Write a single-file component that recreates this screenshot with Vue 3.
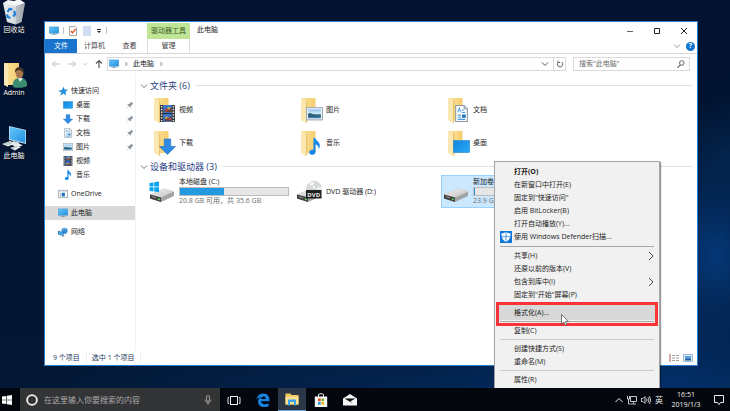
<script setup>
import { ref } from 'vue'

const shortcuts = [
  { icon: 'bin', label: '回收站' },
  { icon: 'user', label: 'Admin' },
  { icon: 'desk-pc', label: '此电脑' },
]

const sidebar = [
  [
    { icon: 'star', label: '快速访问' },
    { icon: 'desktop', label: '桌面', child: true, pinned: true },
    { icon: 'down', label: '下载', child: true, pinned: true },
    { icon: 'doc', label: '文档', child: true, pinned: true },
    { icon: 'picture', label: '图片', child: true, pinned: true },
    { icon: 'film', label: '视频', child: true },
    { icon: 'note', label: '音乐', child: true },
  ],
  [{ icon: 'onedrive', label: 'OneDrive' }],
  [{ icon: 'pc', label: '此电脑', current: true }],
  [{ icon: 'network', label: '网络' }],
]

const folders = [
  { badge: 'film', label: '视频' },
  { badge: 'picture', label: '图片' },
  { badge: 'doc', label: '文档' },
  { badge: 'down', label: '下载' },
  { badge: 'note', label: '音乐' },
  { badge: 'desktop', label: '桌面' },
]

const drives = [
  { icon: 'drive-win', label: '本地磁盘 (C:)', used: 41, info: '20.8 GB 可用，共 35.6 GB' },
  { icon: 'dvd', label: 'DVD 驱动器 (D:)' },
  { icon: 'drive', label: '新加卷', used: 1, info: '23.9 GB', selected: true },
]

const menu = [
  [
    { label: '打开(O)', bold: true },
    { label: '在新窗口中打开(E)' },
    { label: '固定到"快速访问"' },
    { label: '启用 BitLocker(B)' },
    { label: '打开自动播放(Y)...' },
    { label: '使用 Windows Defender扫描...', icon: 'shield' },
  ],
  [
    { label: '共享(H)', more: true },
    { label: '还原以前的版本(V)' },
    { label: '包含到库中(I)', more: true },
    { label: '固定到"开始"屏幕(P)' },
  ],
  [{ label: '格式化(A)...', active: true }],
  [{ label: '复制(C)' }],
  [{ label: '创建快捷方式(S)' }, { label: '重命名(M)' }],
  [{ label: '属性(R)' }],
]

const apps = [
  { icon: 'taskview', label: '任务视图' },
  { icon: 'edge', label: 'Edge' },
  { icon: 'explorer', label: '文件资源管理器', open: true },
  { icon: 'store', label: '应用商店' },
  { icon: 'mail', label: '邮件' },
]

const fileQuery = ref('')
const webQuery = ref('')
</script>

<template>
  <div class="screen">
    <svg class="sprites" aria-hidden="true">
      <defs>
        <linearGradient id="g-fold" x1="0" y1="0" x2="1" y2="0">
          <stop offset="0" stop-color="#fbe3a0" />
          <stop offset="1" stop-color="#f6cd6d" />
        </linearGradient>
        <linearGradient id="g-blue" x1="0" y1="0" x2="1" y2="1">
          <stop offset="0" stop-color="#1583dc" />
          <stop offset="1" stop-color="#27aaf8" />
        </linearGradient>
        <linearGradient id="g-screen" x1="0" y1="0" x2="1" y2="1">
          <stop offset="0" stop-color="#62c6fb" />
          <stop offset="1" stop-color="#2391e0" />
        </linearGradient>
        <linearGradient id="g-sky" x1="0" y1="0" x2="0" y2="1">
          <stop offset="0" stop-color="#8fc1ee" />
          <stop offset="0.5" stop-color="#d6ebf8" />
          <stop offset="0.6" stop-color="#34708a" />
          <stop offset="1" stop-color="#3f7fb8" />
        </linearGradient>
        <linearGradient id="g-bin" x1="0" y1="0" x2="1" y2="0">
          <stop offset="0" stop-color="#e9edf0" />
          <stop offset="0.6" stop-color="#d2d8dc" />
          <stop offset="1" stop-color="#8f979d" />
        </linearGradient>
        <linearGradient id="g-metal" x1="0" y1="0" x2="1" y2="1">
          <stop offset="0" stop-color="#f1f1f1" />
          <stop offset="1" stop-color="#c2c2c2" />
        </linearGradient>
      </defs>
      <symbol id="desktop" viewBox="0 0 16 16">
        <rect x="0.5" y="2.5" width="15" height="11" fill="url(#g-blue)" stroke="#1c86dc" stroke-width="0.600" />
      </symbol>
      <symbol id="down" viewBox="0 0 16 16">
        <path d="M5 1h6v7h4.500L8 15.500.5 8H5z" fill="#2f8be6" stroke="#1d6fc4" stroke-width="0.600" />
      </symbol>
      <symbol id="doc" viewBox="0 0 16 16">
        <path d="M2.500.5h8l3 3v12h-11z" fill="#fdfdfd" stroke="#8d9aa5" />
        <path d="M10.500.5v3h3" fill="#dfe6ec" stroke="#8d9aa5" />
        <path d="M4.500 7 6 3l1.500 4M8.500 5h2M8.500 7h3M4.500 9.500h3M4.500 11.500h3M4.500 13.500h7" fill="none" stroke="#4a9ee0" />
        <rect x="8.500" y="9" width="3.500" height="3" fill="#2573b5" />
      </symbol>
      <symbol id="picture" viewBox="0 0 16 16">
        <rect x="0.500" y="2.500" width="15" height="11.500" fill="#f5f8fa" stroke="#9aa8b4" />
        <rect x="2" y="4" width="12" height="8.500" fill="url(#g-sky)" />
        <path d="M2 8c2-.5 4 0 6 1.500s4 1 6 .5v1H2z" fill="#2b6173" />
      </symbol>
      <symbol id="film" viewBox="0 0 16 16">
        <rect x="1" y="0" width="14" height="16" fill="#343434" />
        <rect x="4" y="0" width="8" height="16" fill="#3d78cf" />
        <path d="M4 7.500h8v1H4z" fill="#262626" />
        <path d="M4.500 6.500 7 3l2 2 3-3v4.500zM5 15l2-4 2 2 2-3 1 5z" fill="#6c402e" />
        <path d="M8 2h2.500v2H8zM6 11h2v2H6z" fill="#e6aa35" />
        <path d="M6 4h2v2H6zM9 12h2v2H9z" fill="#cb4638" />
        <path d="M2.500 1v15M13.500 1v15" stroke="#e8e8e8" stroke-width="1.300" stroke-dasharray="1.300 1.300" />
      </symbol>
      <symbol id="note" viewBox="0 0 16 16">
        <path d="M7 0h1.800c.2 2.500 4.200 3.500 4.200 7 0 1.500-.6 2.700-1.300 3.500.4-2.800-.7-4-2.700-4.700V13c0 1.700-1.400 2.900-3.200 2.900S3 15 3 13.500 4.300 11 6 11h1z" fill="#1289ea" />
      </symbol>
      <symbol id="star" viewBox="0 0 16 16">
        <path d="m9 1 1.500 4.500L16 6l-3.800 3.300L13 15l-4-3-5.500 3.500L5.500 10 0 8l5.700-1.700z" fill="#2c8fdc" />
      </symbol>
      <symbol id="onedrive" viewBox="0 0 16 16">
        <rect x="0.500" y="2" width="15" height="12" fill="#fff" stroke="#7f8d99" />
        <path d="M1 3h14" stroke="#b7c2cb" stroke-width="2" />
        <path d="M3 6h1.500v6H3z" fill="#9aa6b0" />
        <path d="M6 6h5v6H6z" fill="#1b73c4" />
      </symbol>
      <symbol id="pc" viewBox="0 0 16 16">
        <rect x="0.500" y="1.500" width="15" height="10" fill="url(#g-screen)" stroke="#4b9cd2" />
        <path d="M6.500 12h3v1.500h3v1h-9v-1h3z" fill="#7c9cb4" />
      </symbol>
      <symbol id="network" viewBox="0 0 16 16">
        <circle cx="10.500" cy="6" r="5" fill="#3a92d4" />
        <path d="M6.500 4.500c2-2 5-3 7.500-1.500" fill="none" stroke="#a3d4f2" />
        <path d="m0 6 9 2.500v6L0 12z" fill="#1a75c0" />
        <path d="m1 7.300 7 1.900v4L1 11.300z" fill="#4fabe4" />
        <path d="m8 13 3 1-3 1.500L5 14.500z" fill="#8397a7" />
      </symbol>
      <symbol id="pin" viewBox="0 0 16 16">
        <path d="m10 1 5 5-2 .5-3 3-.5 4L6 10l-4.500 5L1 14.500 5.500 10 2.500 6.500l4-.5 3-3z" fill="#8a939c" />
      </symbol>
      <symbol id="folder" viewBox="0 0 24 26">
        <path d="M1.500 1h14v22H3z" fill="url(#g-fold)" />
        <path d="m1 1 5 2.500V26l-5-3z" fill="#fbe7b2" />
        <path d="m6 3.500.1 22.500 1.200-.9V4z" fill="#ecc568" />
      </symbol>
      <symbol id="drive" viewBox="0 0 26 22">
        <path d="m1 13.500 14-6 10 3v4.500l-13 6-11-3.500z" fill="#a4a4a4" />
        <path d="m1 13.500 14-6 10 3-13 6z" fill="url(#g-metal)" />
        <path d="m1 13.500 11 3V21L1 17.500z" fill="#424242" />
        <path d="m3 15.700 4 1.200" stroke="#929292" />
        <path d="m9 18 2 .6" stroke="#4ed95c" stroke-width="1.500" />
      </symbol>
      <symbol id="drive-win" viewBox="0 0 26 22">
        <use href="#drive" width="26" height="22" />
        <path d="m.5 2 4-.6v4.200h-4zM5.200 1.300 10 .5v5.100H5.200zM.5 6.300h4v4.200l-4-.6zM5.200 6.300H10v5l-4.800-.7z" fill="#0aa4ee" />
      </symbol>
      <symbol id="dvd" viewBox="0 0 26 22">
        <use href="#drive" width="26" height="22" />
        <circle cx="18" cy="7.500" r="7.200" fill="#d8dcdd" stroke="#b4b9bb" stroke-width="0.600" />
        <path d="M18 7.500 13 2.300A7 7 0 0 1 18 .4zM18 7.500l6.900-1.400A7 7 0 0 1 25 9z" fill="#f4f6f6" />
        <circle cx="18" cy="6" r="1.800" fill="#fff" stroke="#a7adaf" stroke-width="0.500" />
        <rect x="10" y="9" width="15.500" height="8.500" rx="0.500" fill="#1f1f1f" />
      </symbol>
      <symbol id="bin" viewBox="0 0 26 26">
        <path d="m2 4 22 0-3.500 19-6 2.500-8.500-2.500z" fill="url(#g-bin)" />
        <path d="m2 4 5-3 6 1 5-2 6 4-9 3z" fill="#f6f7f8" />
        <path d="m15 7 9-3-3.500 19-6 2.500z" fill="#a5adb3" opacity="0.600" />
        <path d="m6.500 13 2-3 3 .5M13 12l1.200 3-2 2.500M9.500 19l-3-1-.3-2.700" fill="none" stroke="#1c7ed6" stroke-width="2.200" />
      </symbol>
      <symbol id="user" viewBox="0 0 26 26">
        <path d="M3 1h15v22H5z" fill="url(#g-fold)" />
        <path d="m3 1 4 2v22l-4-2z" fill="#fbe7b2" />
        <path d="M12 25c-1-5 1-8 5-9h4c4 1 5.500 4 5 8-4 2-10 2.500-14 1z" fill="#3b8c71" />
        <path d="m17 16 2 4 3-4z" fill="#e8efe9" />
        <ellipse cx="18.500" cy="11.500" rx="3.800" ry="4.800" fill="#a9764d" />
        <path d="M14 11c-.5-5 3-6.500 5.500-5.500 3 .5 3.500 3 3 6-1-2-2-3-4.500-3.500-2 0-3 1-4 3z" fill="#433526" />
      </symbol>
      <symbol id="desk-pc" viewBox="0 0 26 26">
        <path d="m8 1 17 4v14L8 15z" fill="#b7dbf2" />
        <path d="m8.800 2 15.400 3.700v12L8.800 14z" fill="url(#g-screen)" />
        <path d="m12 16 6 1.500v3l-6-1z" fill="#cdd6dc" />
        <path d="m9 19 8-1 5 2.500-7 1.500zM1 19l8-3 6 2-8 3.500zM9 23l7-2.500 4 1.500-6 3.500z" fill="#e5eaed" />
        <path d="m3 19 6-2M5 20l6-2.500M11 23.500l5-2" stroke="#929da6" stroke-width="0.600" />
      </symbol>
      <symbol id="shield" viewBox="0 0 12 12">
        <rect width="12" height="12" fill="#0e76d8" />
        <path d="M6 1c1.500 1 3 1.300 4.500 1.300 0 4-.8 6.700-4.500 8.700C2.300 9 1.500 6.300 1.500 2.300 3 2.300 4.500 2 6 1z" fill="#fff" />
        <path d="M6 1v10M1.500 5.700h9" stroke="#0e76d8" stroke-width="0.700" />
      </symbol>
      <symbol id="taskview" viewBox="0 0 14 14">
        <rect x="3.500" y="3.500" width="7" height="8" fill="none" stroke="#eee" />
        <path d="M2 4.500H1v6h1M12 4.500h1v6h-1" fill="none" stroke="#ddd" />
      </symbol>
      <symbol id="edge" viewBox="0 0 14 14">
        <path d="M.5 6.500C1.200 2.500 4 .5 7.200.5c4 0 6.300 3 6.300 6.300v1.500H5c.2 2 1.800 2.900 3.900 2.900 1.400 0 2.600-.4 3.700-1v3c-1.200.6-2.700.9-4.300.9-3.800 0-6.300-2.100-6.300-5.400 0-2.200 1.100-3.800 2.900-4.800C2.900 4.300 1.500 5 .5 6.500zM5 5.900h4.700c0-1.600-.8-2.500-2.200-2.500S5.200 4.400 5 5.900z" fill="#1683e0" />
      </symbol>
      <symbol id="explorer" viewBox="0 0 14 14">
        <path d="M.5 1.500h5l1 1.500h7v9.500H.5z" fill="#f3c558" />
        <path d="M.5 4.500h13v8H.5z" fill="#fbe095" />
        <path d="M3 7.500h8v6H9V10H5v3.500H3z" fill="#3aa5e8" />
      </symbol>
      <symbol id="store" viewBox="0 0 14 14">
        <path d="M4.500 4V1.500Q7-.5 9.500 1.500V4" fill="none" stroke="#eee" />
        <path d="M.8 3.500h12.400V14H.8z" fill="#f7f7f7" />
        <path d="M4 5.500h2.700v2.700H4z" fill="#e54b2b" />
        <path d="M7.400 5.500h2.700v2.700H7.400z" fill="#78b62b" />
        <path d="M4 9h2.700v2.700H4z" fill="#1c9be0" />
        <path d="M7.400 9h2.700v2.700H7.400z" fill="#f5b316" />
      </symbol>
      <symbol id="mail" viewBox="0 0 14 14">
        <path d="M0 5.500 7 1l7 4.500v7H0z" fill="#f5f5f5" />
        <path d="M1.500 5.500h11L7.500 8.200l2 2-4.700-2.600z" fill="#0b0e13" />
      </symbol>
      <symbol id="chevron" viewBox="0 0 8 8">
        <path d="m1 2.500 3 3 3-3" fill="none" stroke="currentColor" />
      </symbol>
      <symbol id="angle" viewBox="0 0 8 8">
        <path d="m3 1.500 2.500 2.500L3 6.500" fill="none" stroke="currentColor" />
      </symbol>
    </svg>

    <div class="desktop">
      <ul class="shortcuts">
        <li v-for="s in shortcuts" :key="s.icon">
          <svg><use :href="'#' + s.icon" /></svg>
          <span>{{ s.label }}</span>
        </li>
      </ul>

      <section class="window" aria-label="此电脑">
        <header class="ribbon">
          <div class="caption">
            <div class="quick">
              <svg class="i10"><use href="#pc" /></svg>
              <i class="bar"></i>
              <svg class="i10" viewBox="0 0 10 10">
                <path d="M1.500.5h6l1 1v8h-7z" fill="#fff" stroke="#a6a6a6" />
                <path d="m3 5 1.500 2L7.500 3" fill="none" stroke="#dd5427" stroke-width="1.300" />
              </svg>
              <svg class="i10" viewBox="0 0 10 10">
                <path d="M1 0h8v10H1z" fill="#d3ddf1" />
              </svg>
              <svg class="i6" viewBox="0 0 6 6">
                <path d="M1 1h4v1H1zM1 3h4L3 5z" fill="#222" />
              </svg>
              <i class="bar"></i>
            </div>
            <span class="context">驱动器工具</span>
            <h1>此电脑</h1>
            <div class="controls">
              <button aria-label="最小化"><svg class="i8" viewBox="0 0 8 8"><path d="M1 4.500h6" stroke="#666" /></svg></button>
              <button aria-label="最大化"><svg class="i8" viewBox="0 0 8 8"><path d="M1.500 1.500h5v5h-5z" fill="none" stroke="#222" /></svg></button>
              <button aria-label="关闭"><svg class="i8" viewBox="0 0 8 8"><path d="m1 1 6 6M7 1 1 7" stroke="#222" /></svg></button>
            </div>
          </div>
          <nav class="tabs">
            <button class="file">文件</button>
            <button class="tab">计算机</button>
            <button class="tab">查看</button>
            <button class="manage">管理</button>
            <span class="grow"></span>
            <button class="fold" aria-label="展开功能区"><svg class="i8"><use href="#chevron" /></svg></button>
            <button class="help" aria-label="帮助">?</button>
          </nav>
        </header>

        <div class="address">
          <div class="arrows">
            <button class="dim" aria-label="后退"><svg class="i10" viewBox="0 0 10 10"><path d="M9 5H1.500M4.500 2l-3 3 3 3" fill="none" stroke="currentColor" /></svg></button>
            <button class="dim" aria-label="前进"><svg class="i10" viewBox="0 0 10 10"><path d="M1 5h7.500M5.500 2l3 3-3 3" fill="none" stroke="currentColor" /></svg></button>
            <button class="dim" aria-label="最近位置"><svg class="i6"><use href="#chevron" /></svg></button>
            <button aria-label="向上"><svg class="i10" viewBox="0 0 10 10"><path d="M5 9V1.500M2 4.500l3-3 3 3" fill="none" stroke="#555" stroke-width="1.200" /></svg></button>
          </div>
          <div class="path">
            <svg class="i10"><use href="#pc" /></svg>
            <svg class="i6"><use href="#angle" /></svg>
            <a href="#">此电脑</a>
            <svg class="i6"><use href="#angle" /></svg>
            <span class="grow"></span>
            <button aria-label="历史"><svg class="i8"><use href="#chevron" /></svg></button>
            <button class="reload" aria-label="刷新">
              <svg class="i8" viewBox="0 0 8 8"><path d="M5.500 2a2.700 2.700 0 1 1-3 0M2 .5v2h2" fill="none" stroke="#666" /></svg>
            </button>
          </div>
          <label class="find">
            <input v-model="fileQuery" type="text" aria-label="搜索此电脑" placeholder='搜索"此电脑"' />
            <svg class="i8" viewBox="0 0 8 8"><circle cx="4.800" cy="3" r="2.300" fill="none" stroke="#666" /><path d="m3.300 4.800-2.800 3" stroke="#666" stroke-width="1.200" /></svg>
          </label>
        </div>

        <div class="body">
          <nav class="side">
            <ul v-for="(group, g) in sidebar" :key="g">
              <li v-for="item in group" :key="item.label" :class="{ child: item.child, current: item.current }">
                <svg class="i10"><use :href="'#' + item.icon" /></svg>
                <span>{{ item.label }}</span>
                <svg v-if="item.pinned" class="i8 pin"><use href="#pin" /></svg>
              </li>
            </ul>
          </nav>
          <main class="content">
            <h2><svg class="i8"><use href="#chevron" /></svg>文件夹 (6)</h2>
            <div class="grid">
              <div v-for="f in folders" :key="f.label" class="tile folder">
                <span class="art">
                  <svg class="base"><use href="#folder" /></svg>
                  <svg class="badge"><use :href="'#' + f.badge" /></svg>
                </span>
                <span class="name">{{ f.label }}</span>
              </div>
            </div>
            <h2><svg class="i8"><use href="#chevron" /></svg>设备和驱动器 (3)</h2>
            <div class="grid drives">
              <div v-for="d in drives" :key="d.label" class="tile drive" :class="{ selected: d.selected }">
                <svg class="disk" viewBox="0 0 26 22">
                  <use :href="'#' + d.icon" width="26" height="22" />
                  <text v-if="d.icon === 'dvd'" class="disc-name" x="17.700" y="15.500" text-anchor="middle">DVD</text>
                </svg>
                <div class="facts">
                  <span>{{ d.label }}</span>
                  <div v-if="d.info" class="meter"><i :style="{ width: d.used + '%' }"></i></div>
                  <small v-if="d.info">{{ d.info }}</small>
                </div>
              </div>
            </div>
          </main>
        </div>

        <footer class="status">
          <span>9 个项目</span>
          <span>选中 1 个项目</span>
          <div class="views">
            <svg class="i10" viewBox="0 0 10 10"><path d="M1 1v8" stroke="#c09090" stroke-width="1.500" /><path d="M3 2.500h3M3 5h3M3 7.500h3M7 2.500h3M7 5h3M7 7.500h3" stroke="#a0a0a0" /></svg>
            <svg class="i10" viewBox="0 0 10 10"><rect x="0.500" y="1.500" width="9" height="7" fill="#d9ecfa" stroke="#9fb8cc" /><path d="M2 3h6v4H2z" fill="#5ba3dc" /><path d="M2 6.500c2-2 4 0 6-1v2H2z" fill="#245f9c" /></svg>
          </div>
        </footer>
      </section>

      <div class="menu" role="menu">
        <ul v-for="(group, g) in menu" :key="g">
          <li v-for="item in group" :key="item.label" role="menuitem" :class="{ bold: item.bold, active: item.active, tall: item.icon }">
            <span class="glyph"><svg v-if="item.icon" class="i12"><use :href="'#' + item.icon" /></svg></span>
            <span>{{ item.label }}</span>
            <svg v-if="item.more" class="more" viewBox="0 0 6 10"><path d="m1 1 4 4-4 4" fill="none" stroke="#444" /></svg>
            <template v-if="item.active">
              <i class="marker"></i>
              <svg class="pointer" viewBox="0 0 8 12"><path d="M.5.5v9.500l2.300-2 1.400 3.300 1.500-.7L4.400 7.500h3z" fill="#fff" stroke="#444" stroke-width="0.700" /></svg>
            </template>
          </li>
        </ul>
      </div>
    </div>

    <footer class="taskbar">
      <button class="start" aria-label="开始">
        <svg class="i10" viewBox="0 0 10 10"><path d="m0 1.500 4.300-.6v3.800H0zM4.900.8 10 0v4.700H4.900zM0 5.300h4.300v3.800L0 8.500zM4.900 5.300H10V10l-5.100-.8z" fill="#fff" /></svg>
      </button>
      <label class="cortana">
        <svg class="i12" viewBox="0 0 12 12"><circle cx="6" cy="6" r="4.900" fill="none" stroke="#f4f4f4" stroke-width="1.800" /></svg>
        <input v-model="webQuery" type="text" aria-label="搜索" placeholder="在这里输入你要搜索的内容" />
        <svg class="i10" viewBox="0 0 10 10"><rect x="3.500" y="0.500" width="3" height="5.500" rx="1.500" fill="none" stroke="#bbb" stroke-width="0.800" /><path d="M2 4.500c0 4 6 4 6 0M5 7.500V10" fill="none" stroke="#bbb" stroke-width="0.800" /></svg>
      </label>
      <div class="apps">
        <button v-for="a in apps" :key="a.icon" :class="{ open: a.open }" :aria-label="a.label">
          <svg class="i14"><use :href="'#' + a.icon" /></svg>
        </button>
      </div>
      <div class="tray">
        <svg class="i8" viewBox="0 0 8 8"><path d="m.5 6 3.500-3.500L7.500 6" fill="none" stroke="#eee" /></svg>
        <svg class="i10" viewBox="0 0 10 10"><path d="M3.500 1.500h6v5h-6zM6.500 6.500v2M4 9h5M.5 1v3h2V1M1.500 4v5h2" fill="none" stroke="#ddd" stroke-width="0.900" /></svg>
        <svg class="i10" viewBox="0 0 10 10"><path d="M.5 3.500H2l2-2v7l-2-2H.5zM5.500 3.500q1 1.500 0 3M7 2.300q2 2.700 0 5.400M8.400 1q2.800 4 0 8" fill="none" stroke="#ddd" stroke-width="0.900" /></svg>
        <span class="lang">英</span>
      </div>
      <div class="clock"><time>16:51</time><time>2019/1/3</time></div>
      <button class="notice" aria-label="通知">
        <svg class="i12" viewBox="0 0 12 12"><path d="M1.500 1.500h9v7h-3l-1.500 2-1.500-2h-3z" fill="none" stroke="#eee" /></svg>
      </button>
    </footer>
  </div>
</template>

<style>
body {
  margin: 0;
  background: #020d20;
}
</style>

<style scoped>
.screen {
  display: flex;
  flex-direction: column;
  height: 100vh;
  overflow: hidden;
  font-family: "Open Sans", "Noto Sans CJK SC", sans-serif;
  font-size: 7px;
  line-height: 10px;
  color: #1c1c1c;
}
.screen *,
.screen *::before {
  box-sizing: border-box;
}
.sprites {
  position: absolute;
  width: 0;
  height: 0;
}
ul {
  margin: 0;
  padding: 0;
  list-style: none;
}
svg {
  display: block;
  flex: none;
}
button,
input {
  margin: 0;
  padding: 0;
  border: 0;
  background: none;
  font: inherit;
  color: inherit;
}
button {
  display: flex;
  align-items: center;
  justify-content: center;
}
input {
  outline: 0;
  flex: 1;
  min-width: 0;
}
a {
  color: inherit;
  text-decoration: none;
}
.grow { flex: 1; }
.i6 { width: 6px; height: 6px; }
.i8 { width: 8px; height: 8px; }
.i10 { width: 10px; height: 10px; }
.i12 { width: 12px; height: 12px; }
.i14 { width: 14px; height: 14px; }

.desktop {
  position: relative;
  flex: 1;
  min-height: 0;
  background:
    radial-gradient(ellipse 70px 60px at 100% 40%, #03306088, transparent),
    radial-gradient(ellipse 70px 110px at 98% 66%, #043878, transparent),
    radial-gradient(ellipse 260px 90px at 92% 100%, #02306a, transparent),
    radial-gradient(ellipse 400px 60px at 60% 100%, #022552, transparent),
    linear-gradient(#021230, #031835);
}
.shortcuts {
  width: 28px;
  margin-top: -1px;
  color: #fff;
  text-shadow: 0 1px 1px #000;
}
.shortcuts li {
  display: flex;
  flex-direction: column;
  align-items: center;
  height: 63px;
  white-space: nowrap;
}
.shortcuts svg {
  width: 26px;
  height: 26px;
}

.window {
  position: absolute;
  inset: 21px 32px 22px 44px;
  display: flex;
  flex-direction: column;
  border: 1px solid #2b7fd0;
  background: #fff;
}
.ribbon {
  border-bottom: 1px solid #d5d7da;
}
.caption {
  display: flex;
  height: 17px;
}
.quick {
  display: flex;
  align-items: center;
  gap: 4px;
  width: 102px;
  padding-left: 4px;
}
.bar {
  width: 1px;
  height: 7px;
  background: #c4c4c4;
}
.context {
  width: 43px;
  padding-top: 3px;
  margin-top: 1px;
  background: #bfe596;
  color: #3d5a2c;
  text-align: center;
}
h1 {
  flex: 1;
  margin: 0;
  padding: 3px 7px;
  font-size: 7px;
  font-weight: 400;
}
.controls {
  display: flex;
}
.controls button {
  width: 27px;
}
.tabs {
  display: flex;
  align-items: stretch;
  height: 14px;
  padding-right: 2px;
  color: #444;
}
.file {
  width: 32px;
  background: #1874cd;
  color: #fff;
}
.tab {
  width: 35px;
}
.manage {
  width: 43px;
  border: solid #dcdcdc;
  border-width: 0 1px;
}
.fold {
  padding-right: 5px;
  color: #999;
}
.help {
  align-self: center;
  width: 9px;
  height: 9px;
  border-radius: 50%;
  background: #0f74d1;
  color: #fff;
  font-weight: 700;
}

.address {
  display: flex;
  align-items: center;
  height: 20px;
  padding-right: 7px;
}
.arrows {
  display: flex;
  justify-content: space-between;
  width: 62px;
  padding: 0 3px 0 6px;
  color: #444;
}
.dim { color: #c0c0c0; }
.path {
  display: flex;
  flex: 1;
  align-items: center;
  gap: 4px;
  height: 14px;
  padding-left: 1px;
  border: 1px solid #dadada;
}
.reload {
  align-self: stretch;
  width: 12px;
  border-left: 1px solid #dadada;
}
.path svg { color: #555; }
.find {
  display: flex;
  align-items: center;
  width: 117px;
  height: 14px;
  margin-left: 7px;
  padding: 0 4px 0 5px;
  border: 1px solid #dadada;
}
.find input::placeholder {
  color: #6b6b6b;
  opacity: 1;
}

.body {
  display: flex;
  flex: 1;
  min-height: 0;
}
.side {
  display: flex;
  flex-direction: column;
  gap: 5px;
  width: 91px;
  padding-top: 10px;
  border-right: 1px solid #f3f3f3;
}
.side li {
  display: flex;
  align-items: center;
  gap: 3px;
  height: 14px;
  padding: 0 1px 0 13px;
}
.side li.child { padding-left: 18px; }
.side .current { background: #d9d9d9; }
.pin { margin-left: auto; }
.content {
  flex: 1;
  min-width: 0;
  padding: 4px 5px 0 4px;
}
h2 {
  display: flex;
  align-items: center;
  gap: 2px;
  height: 15px;
  margin: 0;
  font-size: 9px;
  font-weight: 400;
  color: #2a3c82;
}
h2 svg { color: #777; }
h2::after {
  content: "";
  flex: 1;
  height: 1px;
  margin-left: 4px;
  background: #dfe2e5;
}
.grid {
  display: grid;
  grid-template-columns: repeat(auto-fill, 147px);
  padding-left: 7px;
}
.tile {
  display: flex;
  align-items: center;
  height: 33px;
  white-space: nowrap;
}
.folder {
  padding-left: 6px;
}
.art {
  position: relative;
  width: 26px;
  height: 26px;
}
.base {
  width: 24px;
  height: 26px;
}
.badge {
  position: absolute;
  right: 3px;
  bottom: 1px;
  width: 17px;
  height: 17px;
}
.drives { padding-top: 1px; }
.drive {
  padding-left: 2px;
}
.disk {
  width: 26px;
  height: 22px;
  margin-right: 4px;
}
.disc-name {
  font-size: 6px;
  font-weight: 700;
  fill: #eee;
}
.facts {
  display: flex;
  flex: 1;
  flex-direction: column;
}
.meter {
  width: 110px;
  height: 9px;
  border: 1px solid #bcbcbc;
  background: #e6e6e6;
}
.meter i {
  display: block;
  height: 100%;
  background: #2399df;
}
small {
  font-size: 7px;
  color: #6d6d6d;
}
.selected {
  border: 1px solid #99d1ff;
  padding-left: 1px;
  background: #cce8ff;
}
.status {
  display: flex;
  align-items: center;
  height: 14px;
  padding: 0 4px 0 8px;
  color: #1e3760;
}
.status span {
  padding-right: 6px;
  margin-right: 5px;
  border-right: 1px solid #ececec;
}
.views {
  display: flex;
  gap: 4px;
  margin-left: auto;
}

.menu {
  position: absolute;
  top: 161px;
  right: 70px;
  bottom: 0;
  width: 166px;
  overflow: hidden;
  padding: 3px 5px;
  border: 1px solid #a3a3a3;
  border-bottom: 0;
  background: #f1f1f1;
  box-shadow: 1px 1px 1px rgba(0, 0, 0, 0.4);
}
.menu ul + ul {
  margin-top: 2px;
  padding-top: 2px;
  border-top: 1px solid #a8a8a8;
}
.menu ul:nth-child(n + 5) {
  border-top-color: #cccccc;
}
.menu li {
  position: relative;
  display: flex;
  align-items: center;
  height: 13px;
  white-space: nowrap;
}
.menu .tall { height: 14px; }
.glyph {
  width: 14px;
}
.bold { font-weight: 700; }
.more {
  width: 6px;
  height: 10px;
  margin-left: auto;
}
.menu .active {
  background: #d8d8d8;
  box-shadow: 0 0 0 1px #d8d8d8;
}
.marker {
  position: absolute;
  z-index: 1;
  inset: -4px -4px -7px -4px;
  border: 3px solid #fb3338;
}
.pointer {
  position: absolute;
  z-index: 2;
  left: 61px;
  top: 8px;
  width: 8px;
  height: 12px;
}

.taskbar {
  position: relative;
  display: flex;
  align-items: stretch;
  height: 23px;
  background: #04070d;
  color: #f0f0f0;
}
.start {
  width: 20px;
  padding-right: 7px;
}
.cortana {
  display: flex;
  align-items: center;
  gap: 6px;
  width: 200px;
  padding: 0 7px 0 6px;
  background: #333436;
  font-size: 8px;
}
.cortana input::placeholder {
  color: #a9a9a9;
  opacity: 1;
}
.apps {
  display: flex;
  gap: 1px;
}
.apps button { width: 28px; }
.apps .open {
  border-bottom: 1px solid #6ba4d4;
  background: #2b3746;
}
.tray {
  display: flex;
  align-items: center;
  gap: 4px;
  margin-left: auto;
}
.lang { font-size: 8px; }
.clock {
  display: flex;
  flex-direction: column;
  justify-content: center;
  width: 46px;
  text-align: center;
}
.notice {
  width: 21px;
  padding-right: 1px;
}
</style>
